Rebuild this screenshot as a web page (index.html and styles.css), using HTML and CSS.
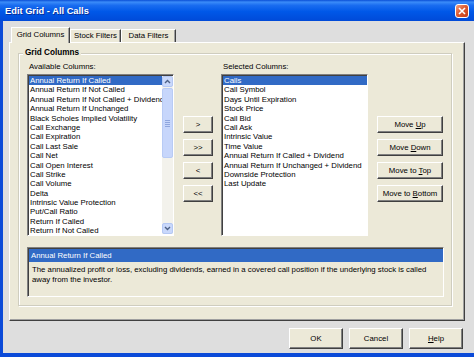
FILE: index.html
```html
<!DOCTYPE html>
<html lang="en">
<head>
  <meta charset="UTF-8" />
  <title>Edit Grid - All Calls</title>
  <link rel="stylesheet" href="styles.css">
</head>
<body>
  <div class="window">
    <div class="titlebar">
      <span class="title">Edit Grid - All Calls</span>
      <div class="close">
        <svg width="8" height="8" viewBox="0 0 8 8"><path d="M1 1L7 7M7 1L1 7" stroke="#fff" stroke-width="1.6" fill="none"/></svg>
      </div>
    </div>

    <div class="client">
      <div class="tabs">
        <div class="tab active w1">Grid Columns</div>
        <div class="tab w2">Stock Filters</div>
        <div class="tab w3">Data Filters</div>
      </div>

      <div class="panel">
        <fieldset class="group">
          <legend>Grid Columns</legend>
          <div class="columns">
            <div class="col">
              <div class="label">Available Columns:</div>
              <div class="listbox">
                <ul class="items">
                  <li class="sel">Annual Return If Called</li>
                  <li>Annual Return If Not Called</li>
                  <li>Annual Return If Not Called + Dividend</li>
                  <li>Annual Return If Unchanged</li>
                  <li>Black Scholes Implied Volatility</li>
                  <li>Call Exchange</li>
                  <li>Call Expiration</li>
                  <li>Call Last Sale</li>
                  <li>Call Net</li>
                  <li>Call Open Interest</li>
                  <li>Call Strike</li>
                  <li>Call Volume</li>
                  <li>Delta</li>
                  <li>Intrinsic Value Protection</li>
                  <li>Put/Call Ratio</li>
                  <li>Return If Called</li>
                  <li>Return If Not Called</li>
                </ul>
                <div class="scrollbar">
                  <div class="sb-btn">
                    <svg width="7" height="5" viewBox="0 0 7 5"><path d="M1 4L3.5 1.5L6 4" stroke="#4d6185" stroke-width="1.4" fill="none"/></svg>
                  </div>
                  <div class="sb-track">
                    <div class="sb-thumb">
                      <svg width="5" height="7" viewBox="0 0 5 7"><path d="M0 0.5H5M0 2.5H5M0 4.5H5M0 6.5H5" stroke="#8fa6de" stroke-width="1"/></svg>
                    </div>
                  </div>
                  <div class="sb-btn">
                    <svg width="7" height="5" viewBox="0 0 7 5"><path d="M1 1L3.5 3.5L6 1" stroke="#4d6185" stroke-width="1.4" fill="none"/></svg>
                  </div>
                </div>
              </div>
            </div>

            <div class="btncol transfer">
              <div class="btn"><span>&gt;</span></div>
              <div class="btn"><span>&gt;&gt;</span></div>
              <div class="btn"><span>&lt;</span></div>
              <div class="btn"><span>&lt;&lt;</span></div>
            </div>

            <div class="col">
              <div class="label">Selected Columns:</div>
              <div class="listbox">
                <ul class="items">
                  <li class="sel">Calls</li>
                  <li>Call Symbol</li>
                  <li>Days Until Expiration</li>
                  <li>Stock Price</li>
                  <li>Call Bid</li>
                  <li>Call Ask</li>
                  <li>Intrinsic Value</li>
                  <li>Time Value</li>
                  <li>Annual Return If Called + Dividend</li>
                  <li>Annual Return If Unchanged + Dividend</li>
                  <li>Downside Protection</li>
                  <li>Last Update</li>
                </ul>
              </div>
            </div>

            <div class="btncol move">
              <div class="btn"><span>Move <u>U</u>p</span></div>
              <div class="btn"><span>Move <u>D</u>own</span></div>
              <div class="btn"><span>Move to <u>T</u>op</span></div>
              <div class="btn"><span>Move to <u>B</u>ottom</span></div>
            </div>
          </div>

          <div class="desc">
            <div class="desc-head">Annual Return If Called</div>
            <p>The annualized profit or loss, excluding dividends, earned in a covered call position if the underlying stock is called<br>away from the investor.</p>
          </div>
        </fieldset>
      </div>

      <div class="footer">
        <div class="btn big"><span>OK</span></div>
        <div class="btn big"><span>Cancel</span></div>
        <div class="btn big"><span><u>H</u>elp</span></div>
      </div>
    </div>
  </div>
</body>
</html>
```

FILE: styles.css
```css
body {
  margin: 0;
  width: 474px;
  height: 357px;
  overflow: hidden;
  font-family: "Liberation Sans", Arial, sans-serif;
  font-size: 7.8px;
  color: #000;
}

.window {
  height: 357px;
  display: flex;
  flex-direction: column;
}

.titlebar {
  height: 21px;
  flex: none;
  display: flex;
  align-items: center;
  justify-content: space-between;
  padding: 0 5px;
  background: linear-gradient(#0a4fd6 0%, #3b8cf9 10%, #1a6df0 25%, #0058e8 55%, #004ad8 100%);
}

.title {
  color: #fff;
  font-weight: bold;
  font-size: 9.3px;
  text-shadow: 1px 1px 0 #0a2f9a;
}

.close {
  width: 14px;
  height: 14px;
  box-sizing: border-box;
  border: 1px solid #fff;
  border-radius: 3px;
  background: linear-gradient(135deg, #f2a183 0%, #de5c33 45%, #c53b17 100%);
  display: flex;
  align-items: center;
  justify-content: center;
}

.client {
  flex: 1;
  background: #dedede;
  border-left: 3px solid #0b4ad8;
  border-bottom: 4px solid #0b4ad8;
  padding: 6px 9px 0 6px;
  display: flex;
  flex-direction: column;
}

.tabs {
  display: flex;
  align-items: flex-end;
  height: 15px;
  padding-left: 2px;
  position: relative;
  z-index: 1;
}

.tab {
  height: 13px;
  line-height: 12px;
  box-sizing: border-box;
  text-align: center;
  background: #ece9d8;
  border-top: 1px solid #fff;
  border-left: 1px solid #fff;
  border-right: 1px solid #404040;
  box-shadow: inset -1px 0 #a0a0a0;
}

.tab.active {
  height: 16px;
  line-height: 14px;
  margin-bottom: -1px;
}

.w1 { width: 59px; }
.w2 { width: 51px; }
.w3 { width: 55px; }

.panel {
  height: 279px;
  box-sizing: border-box;
  background: #ece9d8;
  border: 1px solid;
  border-color: #fff #404040 #404040 #fff;
  box-shadow: inset -1px -1px #a0a0a0;
  padding: 0 12px 0 8px;
}

.group {
  margin: 5px 0 0 0;
  padding: 4px 7px 8px 8px;
  border: 1px solid #cfcdbf;
  box-shadow: 1px 1px 0 #fff, inset 1px 1px 0 #fff;
}

.group legend {
  font-weight: bold;
  font-size: 8.2px;
  line-height: 10px;
  padding: 0 2px;
  margin-left: -4px;
  background: #ece9d8;
}

.columns {
  display: flex;
  gap: 8px;
}

.col {
  width: 147px;
}

.label {
  height: 9px;
  line-height: 9px;
  padding-left: 2px;
}

.listbox {
  height: 162px;
  margin-top: 3px;
  box-sizing: border-box;
  background: #fff;
  border: 1px solid;
  border-color: #808080 #fff #fff #808080;
  box-shadow: inset 1px 1px #404040;
  padding: 1px 0 1px 1px;
  display: flex;
}

.items {
  list-style: none;
  margin: 0;
  padding: 0;
  flex: 1;
  min-width: 0;
  overflow: hidden;
}

.items li {
  height: 9.4px;
  line-height: 9.4px;
  padding-left: 1px;
  white-space: nowrap;
  overflow: hidden;
}

.items li.sel {
  background: #316ac5;
  color: #fff;
}

.scrollbar {
  width: 11px;
  flex: none;
  display: flex;
  flex-direction: column;
  background: #f3f2ec;
}

.sb-btn {
  height: 11px;
  box-sizing: border-box;
  background: #c9d8fb;
  border: 1px solid #b4c8f4;
  border-radius: 2px;
  display: flex;
  align-items: center;
  justify-content: center;
}

.sb-track {
  flex: 1;
  padding-top: 1px;
}

.sb-thumb {
  height: 70px;
  box-sizing: border-box;
  background: #c7d6fb;
  border: 1px solid #b8cbf5;
  border-radius: 2px;
  display: flex;
  align-items: center;
  justify-content: center;
}

.btncol {
  display: flex;
  flex-direction: column;
  gap: 6px;
  padding-top: 54px;
  margin-left: 1px;
}

.transfer { width: 30px; }
.move { width: 66px; }

.btn {
  height: 17px;
  box-sizing: border-box;
  background: #ece9d8;
  border: 1px solid;
  border-color: #fff #404040 #404040 #fff;
  box-shadow: inset -1px -1px #808080;
  display: flex;
  align-items: center;
  justify-content: center;
  white-space: nowrap;
}

.desc {
  margin-top: 11px;
  height: 50px;
  box-sizing: border-box;
  border: 1px solid;
  border-color: #808080 #fff #fff #808080;
  box-shadow: inset 1px 1px #404040;
  padding: 1px 0 0 1px;
}

.desc-head {
  height: 13px;
  line-height: 13px;
  background: #316ac5;
  color: #fff;
  padding-left: 2px;
}

.desc p {
  margin: 0;
  padding: 3px 3px 0 3px;
  line-height: 10px;
}

.footer {
  display: flex;
  justify-content: flex-end;
  gap: 6px;
  margin-top: 7px;
  padding-right: 2px;
}

.btn.big {
  width: 54px;
  height: 21px;
}
```
